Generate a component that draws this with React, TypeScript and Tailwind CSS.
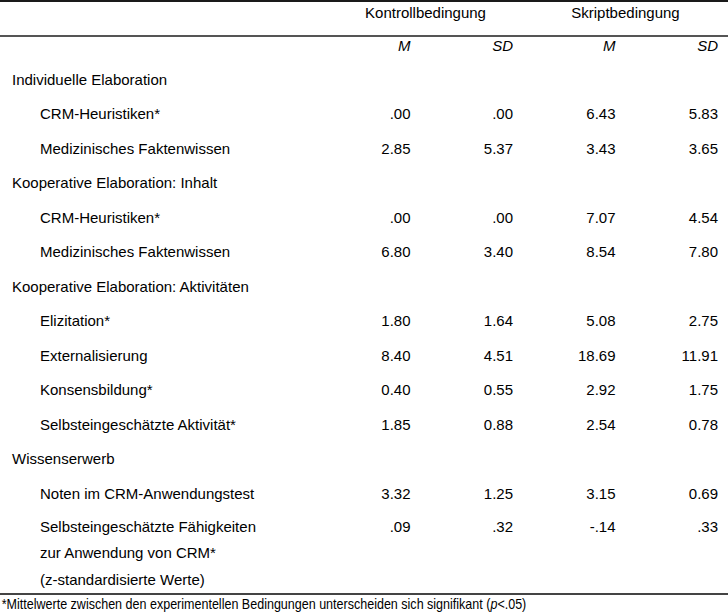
import React from 'react';

type Row = { label: string[]; values: string[] };
type Group = { title: string; rows: Row[] };

const groups: Group[] = [
  {
    title: 'Individuelle Elaboration',
    rows: [
      { label: ['CRM-Heuristiken*'], values: ['.00', '.00', '6.43', '5.83'] },
      { label: ['Medizinisches Faktenwissen'], values: ['2.85', '5.37', '3.43', '3.65'] },
    ],
  },
  {
    title: 'Kooperative Elaboration: Inhalt',
    rows: [
      { label: ['CRM-Heuristiken*'], values: ['.00', '.00', '7.07', '4.54'] },
      { label: ['Medizinisches Faktenwissen'], values: ['6.80', '3.40', '8.54', '7.80'] },
    ],
  },
  {
    title: 'Kooperative Elaboration: Aktivitäten',
    rows: [
      { label: ['Elizitation*'], values: ['1.80', '1.64', '5.08', '2.75'] },
      { label: ['Externalisierung'], values: ['8.40', '4.51', '18.69', '11.91'] },
      { label: ['Konsensbildung*'], values: ['0.40', '0.55', '2.92', '1.75'] },
      { label: ['Selbsteingeschätzte Aktivität*'], values: ['1.85', '0.88', '2.54', '0.78'] },
    ],
  },
  {
    title: 'Wissenserwerb',
    rows: [
      { label: ['Noten im CRM-Anwendungstest'], values: ['3.32', '1.25', '3.15', '0.69'] },
      {
        label: ['Selbsteingeschätzte Fähigkeiten', 'zur Anwendung von CRM*', '(z-standardisierte Werte)'],
        values: ['.09', '.32', '-.14', '.33'],
      },
    ],
  },
];

const cols = 'grid grid-cols-[318px_repeat(4,102.5px)]';

const DataRow = ({ row }: { row: Row }) => {
  if (row.label.length > 1) {
    return (
      <div className={`${cols} pt-[3px] leading-[26.5px]`}>
        <div className="pl-[40px]">
          {row.label.map((l) => (
            <div key={l}>{l}</div>
          ))}
        </div>
        {row.values.map((v, i) => (
          <div key={i} className="text-right pr-[10px]">{v}</div>
        ))}
      </div>
    );
  }
  return (
    <div className={`${cols} h-[34.5px] items-center leading-[17px]`}>
      <div className="pl-[40px]">{row.label[0]}</div>
      {row.values.map((v, i) => (
        <div key={i} className="text-right pr-[10px]">{v}</div>
      ))}
    </div>
  );
};

export default function App() {
  return (
    <div className="w-[728px] bg-white text-black text-[15px] font-['Liberation_Sans',Arial,sans-serif]">
      <div className="h-[2px] bg-[#1a1a1a]" />
      <div className={`${cols} h-[33px] pt-[2px] leading-[17px]`}>
        <div />
        <div className="col-span-2 text-center pl-[10px]">Kontrollbedingung</div>
        <div className="col-span-2 text-center">Skriptbedingung</div>
      </div>
      <div className="h-[2px] bg-[#555]" />
      <div className={`${cols} h-[25px] leading-[17px] italic`}>
        <div />
        <div className="text-right pr-[10px]">M</div>
        <div className="text-right pr-[10px]">SD</div>
        <div className="text-right pr-[10px]">M</div>
        <div className="text-right pr-[10px]">SD</div>
      </div>
      {groups.map((g) => (
        <div key={g.title}>
          <div className="h-[34.5px] flex items-center pl-[12px] leading-[17px]">{g.title}</div>
          {g.rows.map((r, i) => (
            <DataRow key={i} row={r} />
          ))}
        </div>
      ))}
      <div className="h-[2px] bg-[#444]" />
      <div className="pl-[2px] leading-[18px] whitespace-nowrap origin-left scale-x-[0.835]">
        *Mittelwerte zwischen den experimentellen Bedingungen unterscheiden sich signifikant (<span className="italic">p</span>&lt;.05)
      </div>
    </div>
  );
}
